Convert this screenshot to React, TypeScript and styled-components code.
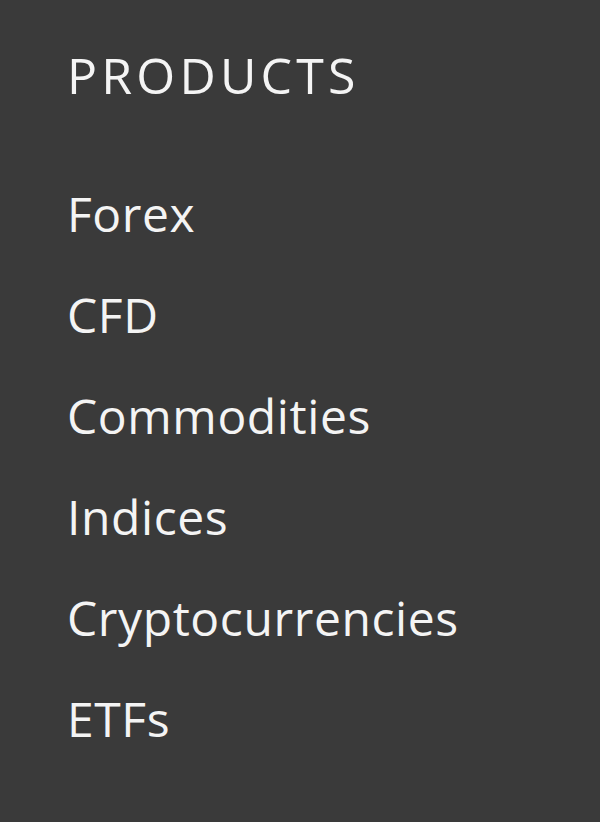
import styled, { createGlobalStyle } from 'styled-components';

const GlobalStyle = createGlobalStyle`
    body {
        margin: 0;
        background-color: #3a3a3a;
    }
`
const Panel = styled.nav`
    font-family: "Open Sans", "Noto Sans", sans-serif;
    color: #f4f4f4;
    min-height: 822px;
    box-sizing: border-box;
    padding: 45px 0 0 67px;
`
const Heading = styled.h2`
    font-size: 50px;
    font-weight: 400;
    line-height: 60px;
    letter-spacing: 4.2px;
    margin: 0 0 58px;
`
const ProductList = styled.ul`
    list-style: none;
    margin: 0;
    padding: 0;
`
const ProductItem = styled.li`
    font-size: 48px;
    font-weight: 400;
    line-height: 101px;
    letter-spacing: 0.6px;
`

const products = ['Forex', 'CFD', 'Commodities', 'Indices', 'Cryptocurrencies', 'ETFs'];

function App() {
    return (
        <>
            <GlobalStyle />
            <Panel>
                <Heading>PRODUCTS</Heading>
                <ProductList>
                    {products.map((name) => (
                        <ProductItem key={name}>{name}</ProductItem>
                    ))}
                </ProductList>
            </Panel>
        </>
    )
}

export default App;
